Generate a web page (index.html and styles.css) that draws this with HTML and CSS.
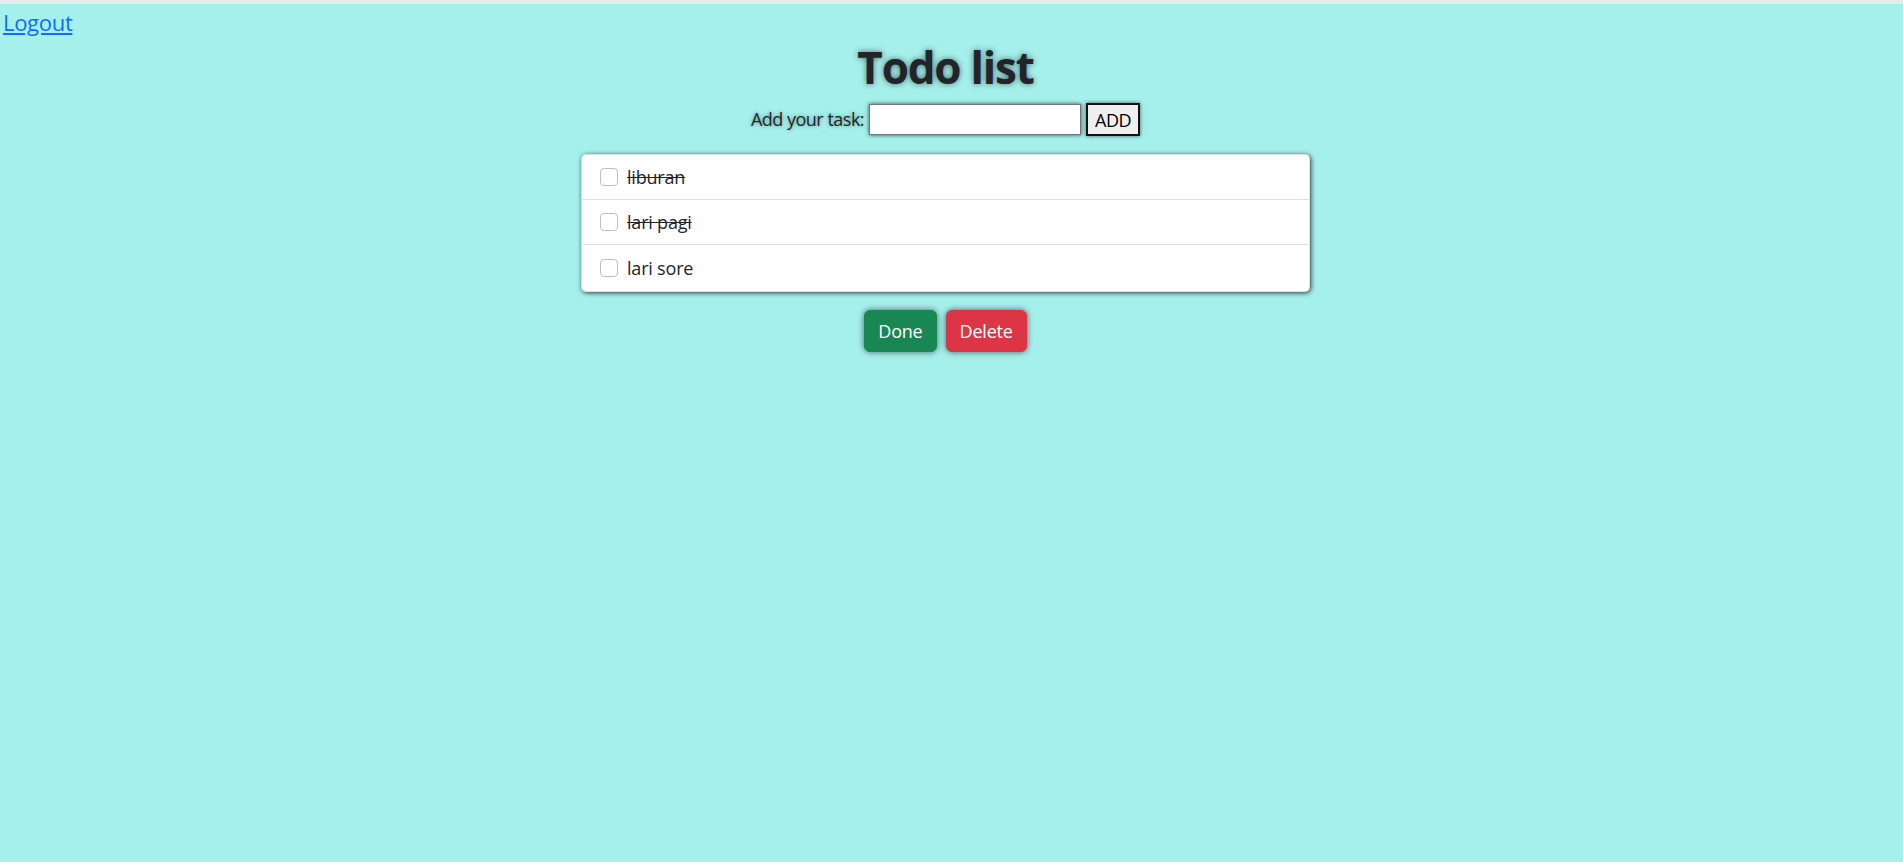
FILE: index.html
```html
<!DOCTYPE html>
<html lang="id">
<head>
<meta charset="utf-8">
<title>Todo list</title>
<link rel="stylesheet" href="styles.css">
</head>
<body>
<div class="topbar"></div>
<div class="page">
  <a class="logout" href="#">Logout</a>
  <main class="main">
    <h1 class="title">Todo list</h1>
    <form class="add-form">
      <label class="add-label" for="task">Add your task:</label>
      <input class="add-input" id="task" type="text">
      <button class="add-btn" type="button">ADD</button>
    </form>
    <ul class="list">
      <li class="item"><span class="check"></span><span class="done-text">liburan</span></li>
      <li class="item"><span class="check"></span><span class="done-text">lari pagi</span></li>
      <li class="item"><span class="check"></span><span>lari sore</span></li>
    </ul>
    <div class="actions">
      <button class="btn btn-done" type="button">Done</button>
      <button class="btn btn-delete" type="button">Delete</button>
    </div>
  </main>
</div>
</body>
</html>
```

FILE: styles.css
```css
* { box-sizing: border-box; }
html, body { margin: 0; padding: 0; }
body {
  background: #a6f0ec;
  font-family: "Open Sans", "Noto Sans", sans-serif;
  font-size: 18px;
  line-height: 1.5;
  letter-spacing: -0.2px;
  color: #212529;
  min-height: 862px;
}
.topbar {
  height: 4px;
  background: #e9e9e9;
}
.page {
  padding-right: 12px;
}
.logout {
  display: inline-block;
  margin-left: 3px;
  font-size: 22px;
  line-height: 36px;
  letter-spacing: -0.3px;
  color: #0d6efd;
  text-decoration: underline;
}
.main {
  display: flex;
  flex-direction: column;
  align-items: center;
}
.title {
  margin: 0 0 9px;
  font-size: 44px;
  line-height: 54px;
  font-weight: 700;
  letter-spacing: -1.2px;
  color: #212529;
  text-shadow: 0 0 6px rgba(0, 0, 0, 0.55);
}
.add-form {
  display: flex;
  align-items: center;
  gap: 5px;
  margin: 0;
  height: 33px;
}
.add-label {
  letter-spacing: -0.5px;
  text-shadow: 0 0 4px rgba(0, 0, 0, 0.45);
}
.add-input {
  width: 212px;
  height: 31px;
  border: 1px solid #767676;
  background: #fff;
  box-shadow: 0 0 4px rgba(0, 0, 0, 0.7);
  padding: 1px 4px;
  font: inherit;
}
.add-btn {
  width: 54px;
  height: 33px;
  padding: 0;
  background: #efefef;
  border: 2px solid #111;
  box-shadow: 0 0 4px rgba(0, 0, 0, 0.6);
  font-family: inherit;
  font-size: 18px;
  letter-spacing: -0.4px;
  color: #000;
}
.list {
  list-style: none;
  margin: 18px 0 0;
  padding: 0;
  width: 729px;
  background: #fff;
  border: 1px solid rgba(0, 0, 0, 0.125);
  border-radius: 5px;
  box-shadow: 1px 1px 5px rgba(0, 0, 0, 0.75);
}
.item {
  display: flex;
  align-items: center;
  height: 45px;
  padding: 0 18px;
  border-bottom: 1px solid #dfdfdf;
}
.item:last-child {
  border-bottom: 0;
  height: 46px;
}
.check {
  width: 18px;
  height: 18px;
  margin-right: 9px;
  border: 1px solid rgba(0, 0, 0, 0.25);
  border-radius: 4.5px;
  background: #fff;
  flex: none;
}
.done-text {
  text-decoration: line-through;
}
.actions {
  display: flex;
  gap: 9px;
  margin-top: 18px;
}
.btn {
  height: 42px;
  padding: 0 13px;
  border: 1px solid transparent;
  border-radius: 6px;
  font-family: inherit;
  font-size: 18px;
  letter-spacing: -0.2px;
  color: #fff;
  box-shadow: 0 0 6px rgba(0, 0, 0, 0.6);
}
.btn-done {
  background: #198754;
  border-color: #198754;
}
.btn-delete {
  background: #dc3545;
  border-color: #dc3545;
}
```
